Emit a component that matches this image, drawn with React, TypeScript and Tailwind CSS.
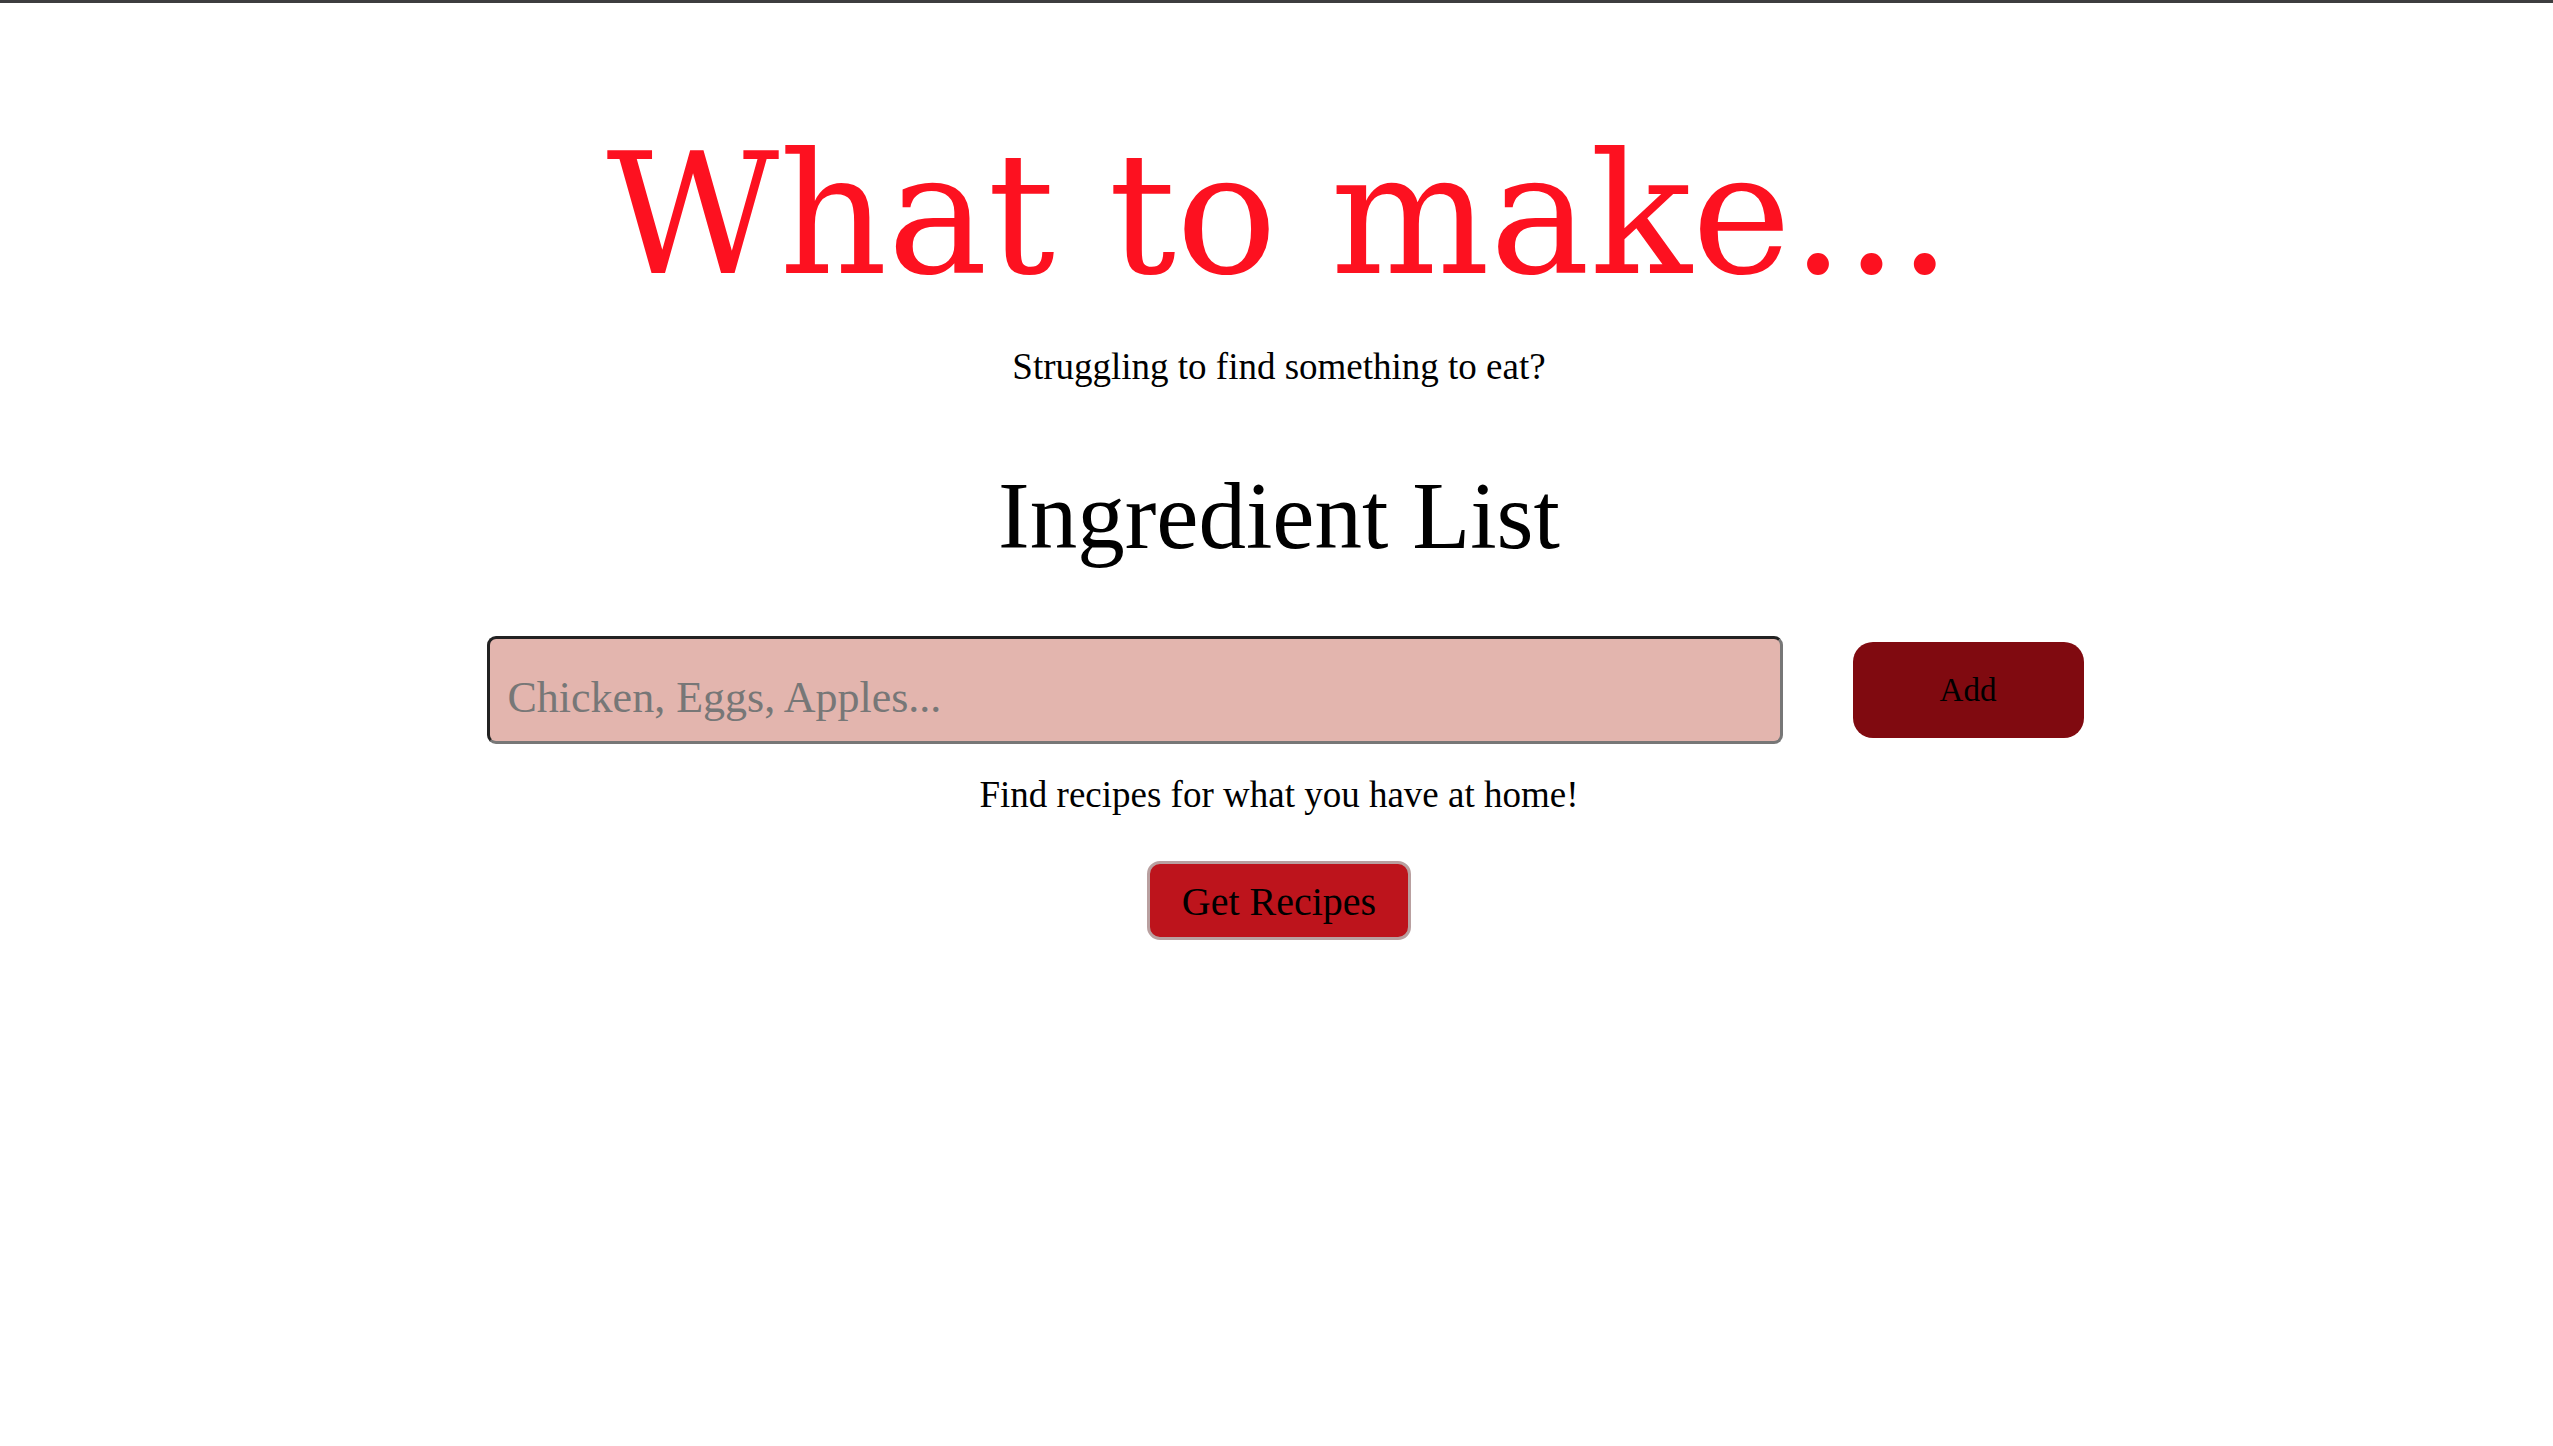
export default function App() {
  const serif = { fontFamily: '"Liberation Serif", "Times New Roman", serif' };

  return (
    <div className="min-h-screen w-full bg-white">
      <div className="h-[3px] w-full bg-[#3d3d3f]" />
      <main className="flex flex-col items-center pl-[5px] text-black" style={serif}>
        <h1
          className="mt-[128px] text-[168px] leading-none text-[#fd1120]"
          style={{ fontFamily: '"DejaVu Serif", serif' }}
        >
          What to make...
        </h1>
        <p className="mt-[49px] text-[37px] leading-none">Struggling to find something to eat?</p>
        <h2 className="mt-[84px] text-[95px] leading-none">Ingredient List</h2>

        <div className="mt-[72px] ml-[12px] flex items-center gap-[70px]">
          <input
            type="text"
            placeholder="Chicken, Eggs, Apples..."
            className="h-[108px] w-[1296px] rounded-[9px] border-[3px] border-t-[#222] border-l-[#222] border-b-[#777] border-r-[#777] bg-[#e3b5ae] pl-[18px] pt-[14px] text-[44px] text-black outline-none placeholder:text-[#777]"
            style={serif}
          />
          <button
            className="h-[96px] w-[231px] rounded-[20px] bg-[#800a10] text-[33px] leading-none text-black"
            style={serif}
          >
            Add
          </button>
        </div>

        <p className="mt-[32px] text-[37px] leading-none">Find recipes for what you have at home!</p>

        <button
          className="mt-[48px] rounded-[13px] border-[3px] border-[#b9a0a0] bg-[#bd141c] px-[32px] pt-[18px] pb-[15px] text-[40px] leading-none text-black"
          style={serif}
        >
          Get Recipes
        </button>
      </main>
    </div>
  );
}
